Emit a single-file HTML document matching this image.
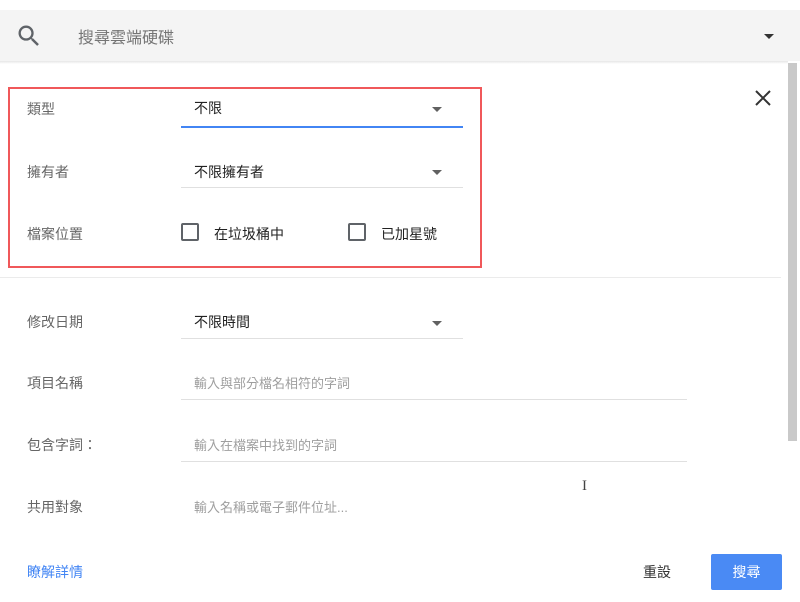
<!DOCTYPE html>
<html><head><meta charset="utf-8"><style>
*{margin:0;padding:0;box-sizing:border-box}
body{width:800px;height:602px;overflow:hidden;background:#fff;font-family:"Liberation Sans","Noto Sans CJK TC",sans-serif;position:relative;color:#212121}
.abs{position:absolute}
.lbl{position:absolute;left:27px;font-size:14px;color:#666}
.val{position:absolute;font-size:14px;color:#222}
.ph{position:absolute;font-size:13px;color:#9e9e9e}
.line{position:absolute;height:1px;background:#e0e0e0}
.tri{position:absolute;width:0;height:0;border-left:5px solid transparent;border-right:5px solid transparent;border-top:5px solid #616161}
.cb{position:absolute;width:18px;height:18px;border:2px solid #5f6368;border-radius:2px}
</style></head><body>
<div class="abs" style="left:0;top:10px;width:800px;height:51px;background:#f4f4f4"></div>
<svg class="abs" style="left:15px;top:22px" width="28" height="28" viewBox="0 0 24 24"><path fill="#5f6368" d="M15.5 14h-.79l-.28-.27A6.47 6.47 0 0 0 16 9.5 6.5 6.5 0 1 0 9.5 16c1.61 0 3.09-.59 4.23-1.57l.27.28v.79l5 4.99L20.49 19l-4.99-5zm-6 0C7.01 14 5 11.99 5 9.5S7.01 5 9.5 5 14 7.01 14 9.5 11.99 14 9.5 14z"/></svg>
<div class="abs" style="left:78px;top:24px;font-size:16px;color:#757575">搜尋雲端硬碟</div>
<div class="tri" style="left:764px;top:34px;border-top-color:#333"></div>
<div class="abs" style="left:0;top:61px;width:788px;height:3px;background:linear-gradient(#e6e6e6,#fff)"></div>
<div class="abs" style="left:788px;top:63px;width:9px;height:378px;background:#c9c9c9"></div>
<div class="abs" style="left:8px;top:87px;width:474px;height:181px;border:2px solid #f0585a"></div>
<svg class="abs" style="left:754px;top:89px" width="18" height="18" viewBox="0 0 18 18"><path d="M2 2L16 16M16 2L2 16" stroke="#333" stroke-width="2"/></svg>
<div class="lbl" style="top:99px">類型</div>
<div class="val" style="left:194px;top:98px">不限</div>
<div class="tri" style="left:432px;top:107px"></div>
<div class="abs" style="left:181px;top:126px;width:282px;height:2px;background:#4285f4"></div>
<div class="lbl" style="top:162px">擁有者</div>
<div class="val" style="left:194px;top:162px">不限擁有者</div>
<div class="tri" style="left:432px;top:170px"></div>
<div class="line" style="left:181px;top:187px;width:282px"></div>
<div class="lbl" style="top:224px">檔案位置</div>
<div class="cb" style="left:181px;top:223px"></div>
<div class="val" style="left:214px;top:224px">在垃圾桶中</div>
<div class="cb" style="left:348px;top:223px"></div>
<div class="val" style="left:381px;top:224px">已加星號</div>
<div class="line" style="left:0;top:277px;width:781px;background:#ebebeb"></div>
<div class="lbl" style="top:312px">修改日期</div>
<div class="val" style="left:194px;top:312px">不限時間</div>
<div class="tri" style="left:432px;top:321px"></div>
<div class="line" style="left:181px;top:338px;width:282px"></div>
<div class="lbl" style="top:373px">項目名稱</div>
<div class="ph" style="left:194px;top:373px">輸入與部分檔名相符的字詞</div>
<div class="line" style="left:181px;top:399px;width:506px"></div>
<div class="lbl" style="top:435px">包含字詞：</div>
<div class="ph" style="left:194px;top:435px">輸入在檔案中找到的字詞</div>
<div class="line" style="left:181px;top:461px;width:506px"></div>
<div class="abs" style="left:582px;top:478px;font-size:15px;color:#444;font-family:'Liberation Serif',serif">I</div>
<div class="lbl" style="top:497px">共用對象</div>
<div class="ph" style="left:194px;top:497px">輸入名稱或電子郵件位址...</div>
<div class="abs" style="left:27px;top:562px;font-size:14px;color:#4285f4">瞭解詳情</div>
<div class="abs" style="left:643px;top:562px;font-size:14px;color:#333">重設</div>
<div class="abs" style="left:711px;top:554px;width:71px;height:36px;background:#4a8af4;border-radius:2px;color:#fff;font-size:14px;text-align:center;line-height:36px">搜尋</div>
</body></html>
